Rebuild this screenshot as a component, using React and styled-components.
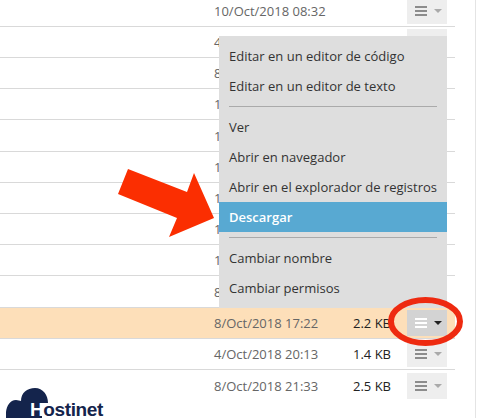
import React from "react";
import styled, { createGlobalStyle } from "styled-components";

const Global = createGlobalStyle`
  html, body {
    margin: 0;
    padding: 0;
    background: #fff;
  }
  body {
    font-family: "Open Sans", "Liberation Sans", sans-serif;
    overflow: hidden;
  }
`;

const Page = styled.div`
  position: relative;
  width: 477px;
  height: 418px;
  overflow: hidden;
  background: #fff;
`;
const Edge = styled.div`
  position: absolute;
  top: 0;
  bottom: 0;
  left: 475px;
  width: 1px;
  background: #e4e4e4;
`;
const Table = styled.div`
  width: 455px;
  margin-top: -5px;
  display: flex;
  flex-direction: column;
`;
const Row = styled.div`
  display: flex;
  align-items: center;
  height: ${(p) => p.$h || 31}px;
  box-sizing: border-box;
  padding-left: 214px;
  font-size: 13px;
  color: #666;
  background: ${(p) => (p.$active ? "#fddfb9" : "transparent")};
  border-bottom: ${(p) => (p.$last ? "none" : "1px solid #d9d9d9")};
`;
const DateCell = styled.div`
  width: 139px;
  white-space: nowrap;
`;
const Size = styled.div`
  width: 54px;
  color: #222;
  white-space: nowrap;
`;
const Actions = styled.div`
  display: flex;
  align-items: center;
  gap: 7px;
  padding-left: 8px;
  box-sizing: border-box;
  width: 40px;
  height: 26px;
  background: ${(p) => (p.$active ? "#d3d3d3" : "#eeeeee")};
`;
const Bars = styled.div`
  display: flex;
  flex-direction: column;
  gap: 2px;
  width: 12px;
  i {
    display: block;
    height: 2px;
    background: ${(p) => (p.$active ? "#fff" : "#8c8c8c")};
  }
`;
const Caret = styled.div`
  width: 0;
  height: 0;
  border-left: 4px solid transparent;
  border-right: 4px solid transparent;
  border-top: 4px solid ${(p) => (p.$active ? "#222" : "#aaa")};
`;
const Menu = styled.div`
  position: absolute;
  left: 219px;
  top: 36px;
  width: 228px;
  height: 272px;
  background: #dedede;
  padding-top: 5px;
  box-sizing: border-box;
  display: flex;
  flex-direction: column;
`;
const Item = styled.div`
  height: 30px;
  display: flex;
  align-items: center;
  padding-left: 10px;
  font-size: 13px;
  white-space: nowrap;
  color: ${(p) => (p.$active ? "#fff" : "#333")};
  font-weight: ${(p) => (p.$active ? 600 : 400)};
  background: ${(p) => (p.$active ? "#58a9d2" : "transparent")};
`;
const Divider = styled.div`
  height: 1px;
  margin: 5px 10px;
  background: #aaa;
`;
const Arrow = styled.svg`
  position: absolute;
  left: 100px;
  top: 150px;
  pointer-events: none;
`;
const Ring = styled.svg`
  position: absolute;
  left: 380px;
  top: 290px;
  pointer-events: none;
`;
const Logo = styled.div`
  position: absolute;
  left: 6px;
  top: 386px;
  width: 100px;
  height: 32px;
  color: #14244c;
`;
const LogoText = styled.span`
  position: absolute;
  left: 24px;
  top: 16px;
  font-family: "Liberation Sans", sans-serif;
  font-size: 19px;
  font-weight: 700;
  line-height: 16px;
  letter-spacing: -0.4px;
  white-space: nowrap;
`;
const LogoCut = styled.span`
  color: #fff;
`;

const rows = [
  { date: "10/Oct/2018 08:32", h: 32 },
  { date: "4/Oct/2018 20:13" },
  { date: "8/Oct/2018 21:33" },
  { date: "10/Oct/2018 08:32" },
  { date: "10/Oct/2018 08:32", h: 32 },
  { date: "10/Oct/2018 08:32" },
  { date: "10/Oct/2018 08:32" },
  { date: "10/Oct/2018 08:32" },
  { date: "10/Oct/2018 08:32" },
  { date: "8/Oct/2018 21:33", h: 32 },
  { date: "8/Oct/2018 17:22", size: "2.2 KB", active: true },
  { date: "4/Oct/2018 20:13", size: "1.4 KB" },
  { date: "8/Oct/2018 21:33", size: "2.5 KB", last: true },
];

const groups = [
  ["Editar en un editor de código", "Editar en un editor de texto"],
  ["Ver", "Abrir en navegador", "Abrir en el explorador de registros", "Descargar"],
  ["Cambiar nombre", "Cambiar permisos"],
];

export default function App() {
  return (
    <Page>
      <Global />
      <Table>
        {rows.map((r, i) => (
          <Row key={i} $active={r.active} $last={r.last} $h={r.h}>
            <DateCell>{r.date}</DateCell>
            <Size>{r.size}</Size>
            <Actions $active={r.active}>
              <Bars $active={r.active}>
                <i />
                <i />
                <i />
              </Bars>
              <Caret $active={r.active} />
            </Actions>
          </Row>
        ))}
      </Table>
      <Edge />
      <Menu>
        {groups.map((g, i) => (
          <React.Fragment key={i}>
            {i > 0 && <Divider />}
            {g.map((t) => (
              <Item key={t} $active={t === "Descargar"}>
                {t}
              </Item>
            ))}
          </React.Fragment>
        ))}
      </Menu>
      <Arrow width="130" height="100">
        <polygon points="28,19 87,42 94,23 114,68 69,87 77,68 18,44" fill="#fb2e01" />
      </Arrow>
      <Ring width="97" height="65">
        <ellipse cx="45.5" cy="31.5" rx="34.5" ry="21.5" fill="none" stroke="#ee2a10" strokeWidth="6" />
      </Ring>
      <Logo>
        <svg width="50" height="32" viewBox="0 0 50 32">
          <path
            d="M0 32 C-1 24 2 14 10 14 C12 14 14 15 15 15 C15 7 21 2 29 2 C37 2 42 9 42 17 L36 17 L36 32 Z"
            fill="#14244c"
          />
        </svg>
        <LogoText>
          <LogoCut>H</LogoCut>ostinet
        </LogoText>
      </Logo>
    </Page>
  );
}
